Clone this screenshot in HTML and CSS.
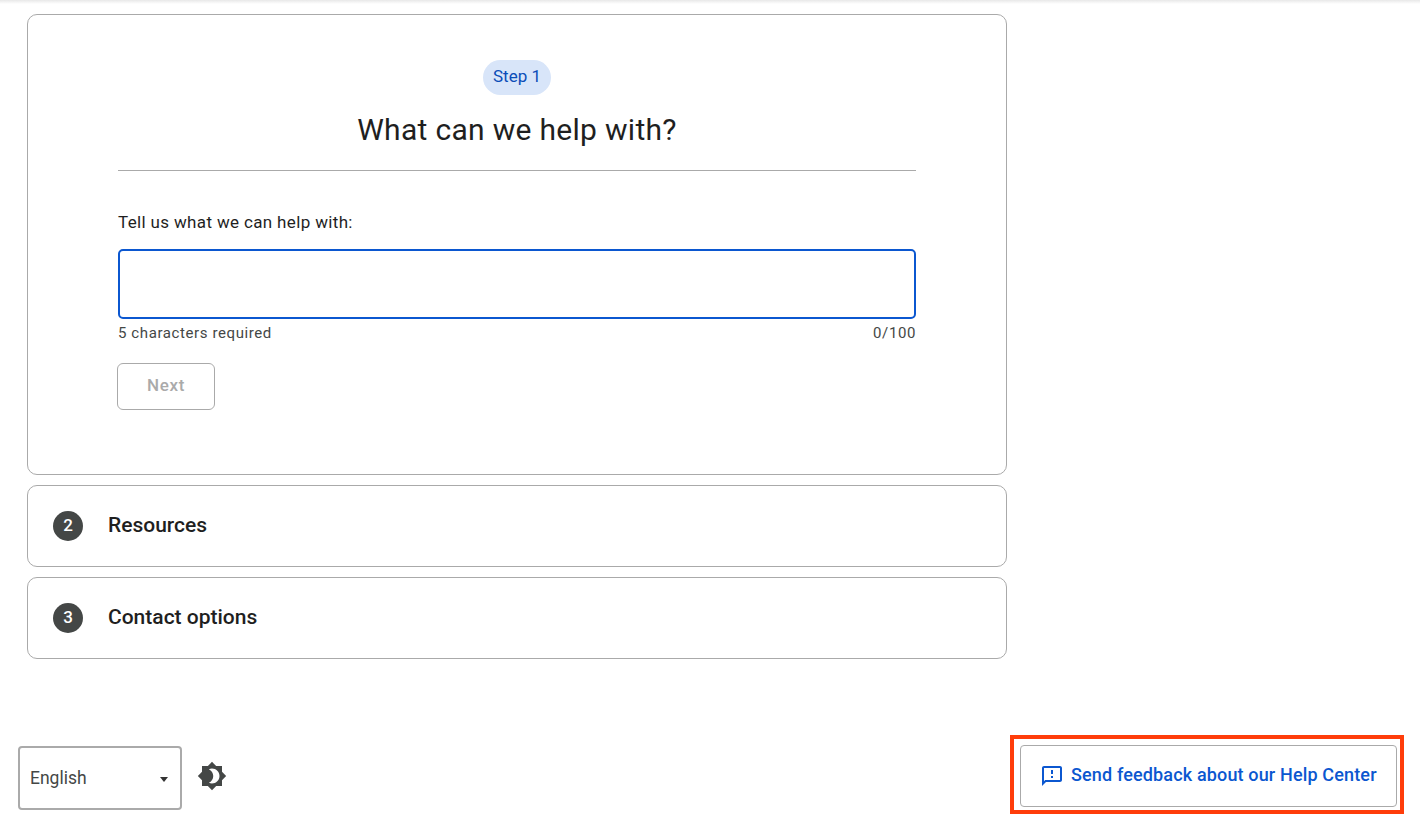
FILE: index.html
```html
<!DOCTYPE html>
<html lang="en">

<head>
    <meta charset="UTF-8">
    <meta name="viewport" content="width=device-width, initial-scale=1.0">
    <title>What can we help with?</title>

    <link rel="stylesheet" href="styles.css">
</head>

<body>
    <div class="top-shadow"></div>

    <main class="steps">
        <section class="card step-open">
            <span class="step-pill">Step 1</span>
            <h1>What can we help with?</h1>
            <hr class="divider">
            <div class="form-group">
                <label for="helpText">Tell us what we can help with:</label>
                <textarea id="helpText" class="help-input"></textarea>
                <div class="hint-row">
                    <span>5 characters required</span>
                    <span>0/100</span>
                </div>
            </div>
            <button type="button" class="next-button" disabled>Next</button>
        </section>

        <section class="card step-closed">
            <span class="step-number">2</span>
            <h2>Resources</h2>
        </section>

        <section class="card step-closed">
            <span class="step-number">3</span>
            <h2>Contact options</h2>
        </section>
    </main>

    <footer class="page-footer">
        <div class="footer-left">
            <div class="language-select">
                <span>English</span>
                <span class="caret"></span>
            </div>
            <svg class="theme-icon" viewBox="0 0 24 24" aria-hidden="true">
                <path d="M20 8.69V4h-4.69L12 .69 8.69 4H4v4.69L.69 12 4 15.31V20h4.69L12 23.31 15.31 20H20v-4.69L23.31 12 20 8.69zM12 18c-.89 0-1.74-.2-2.5-.55C11.56 16.5 13 14.42 13 12s-1.44-4.5-3.5-5.45C10.26 6.2 11.11 6 12 6c3.31 0 6 2.69 6 6s-2.69 6-6 6z"/>
            </svg>
        </div>
        <div class="feedback-highlight">
            <button type="button" class="feedback-button">
                <svg class="feedback-icon" viewBox="0 0 24 24" aria-hidden="true">
                    <path d="M20 2H4c-1.1 0-1.99.9-1.99 2L2 22l4-4h14c1.1 0 2-.9 2-2V4c0-1.1-.9-2-2-2zm0 14H5.17L4 17.17V4h16v12zm-9-4h2v2h-2zm0-6h2v4h-2z"/>
                </svg>
                <span class="feedback-label">Send feedback about our Help Center</span>
            </button>
        </div>
    </footer>
</body>

</html>
```

FILE: styles.css
```css
html,
body {
    height: 100%;
}

body {
    font-family: Roboto, Arial, sans-serif;
    background-color: #fff;
    color: #1f1f1f;
    margin: 0;
    overflow: hidden;
}

.top-shadow {
    height: 4px;
    background: linear-gradient(#e8e8e8, #fff);
}

.steps {
    width: 980px;
    margin: 10px 0 0 27px;
    display: flex;
    flex-direction: column;
    gap: 10px;
}

.card {
    box-sizing: border-box;
    border: 1px solid #aaa;
    border-radius: 10px;
}

.step-open {
    height: 461px;
    padding: 45px 90px 0;
    display: flex;
    flex-direction: column;
    align-items: center;
}

.step-pill {
    box-sizing: border-box;
    width: 68px;
    height: 35px;
    border-radius: 18px;
    background-color: #d8e5f9;
    color: #0b4db8;
    font-size: 17px;
    line-height: 33px;
    text-align: center;
}

h1 {
    margin: 16px 0 0;
    font-size: 30px;
    font-weight: 400;
    line-height: 38px;
    letter-spacing: 0.3px;
}

.divider {
    width: 100%;
    margin: 21px 0 0;
    border: none;
    border-top: 1px solid #aaa;
}

.form-group {
    width: 100%;
    margin-top: 40px;
}

label {
    display: block;
    font-size: 17px;
    line-height: 22px;
    letter-spacing: 0.35px;
}

.help-input {
    display: block;
    box-sizing: border-box;
    width: 100%;
    height: 70px;
    margin: 16px 0 0;
    border: 2px solid #0b57d0;
    border-radius: 5px;
    outline: none;
    resize: none;
}

.hint-row {
    display: flex;
    justify-content: space-between;
    margin-top: 5px;
    color: #444746;
    font-size: 15px;
    line-height: 18px;
    letter-spacing: 0.6px;
}

.next-button {
    align-self: flex-start;
    width: 98px;
    height: 47px;
    margin: 21px 0 0 -1px;
    padding: 0 0 3px;
    background-color: #fff;
    border: 1px solid #aaa;
    border-radius: 6px;
    color: #aaa;
    font-family: inherit;
    font-size: 17px;
    font-weight: 500;
    letter-spacing: 0.6px;
}

.step-closed {
    height: 82px;
    padding-left: 25px;
    display: flex;
    align-items: center;
    gap: 25px;
}

.step-number {
    width: 30px;
    height: 30px;
    border-radius: 50%;
    background-color: #444746;
    color: #fff;
    font-size: 17px;
    font-weight: 500;
    line-height: 29px;
    text-align: center;
}

h2 {
    margin: 0 0 2px;
    font-size: 21px;
    font-weight: 500;
    line-height: 28px;
}

.page-footer {
    display: flex;
    justify-content: space-between;
    align-items: flex-start;
    margin-top: 76px;
    padding: 0 16px 0 18px;
}

.footer-left {
    display: flex;
    align-items: center;
    gap: 15px;
    margin-top: 11px;
}

.language-select {
    box-sizing: border-box;
    width: 164px;
    height: 64px;
    padding: 0 12px 0 10px;
    display: flex;
    justify-content: space-between;
    align-items: center;
    border: 2px solid #aaa;
    border-radius: 4px;
    color: #444746;
    font-size: 17.5px;
}

.caret {
    width: 0;
    height: 0;
    margin-top: 2px;
    border-left: 4px solid transparent;
    border-right: 4px solid transparent;
    border-top: 5px solid #333;
}

.theme-icon {
    width: 30px;
    height: 30px;
    margin-top: -4px;
    fill: #444746;
}

.feedback-highlight {
    padding: 6px 3px 3px 6px;
    border: 4px solid #ff3d0a;
}

.feedback-button {
    box-sizing: border-box;
    width: 377px;
    height: 62px;
    padding: 0 0 0 19px;
    display: flex;
    align-items: center;
    gap: 7px;
    background-color: #fff;
    border: 1px solid #aaa;
    border-radius: 4px;
    color: #0b57d0;
    font-family: inherit;
    font-size: 18px;
    font-weight: 500;
    letter-spacing: 0.15px;
}

.feedback-label {
    padding-bottom: 4px;
}

.feedback-icon {
    width: 24px;
    height: 24px;
    fill: #0b57d0;
}
```
